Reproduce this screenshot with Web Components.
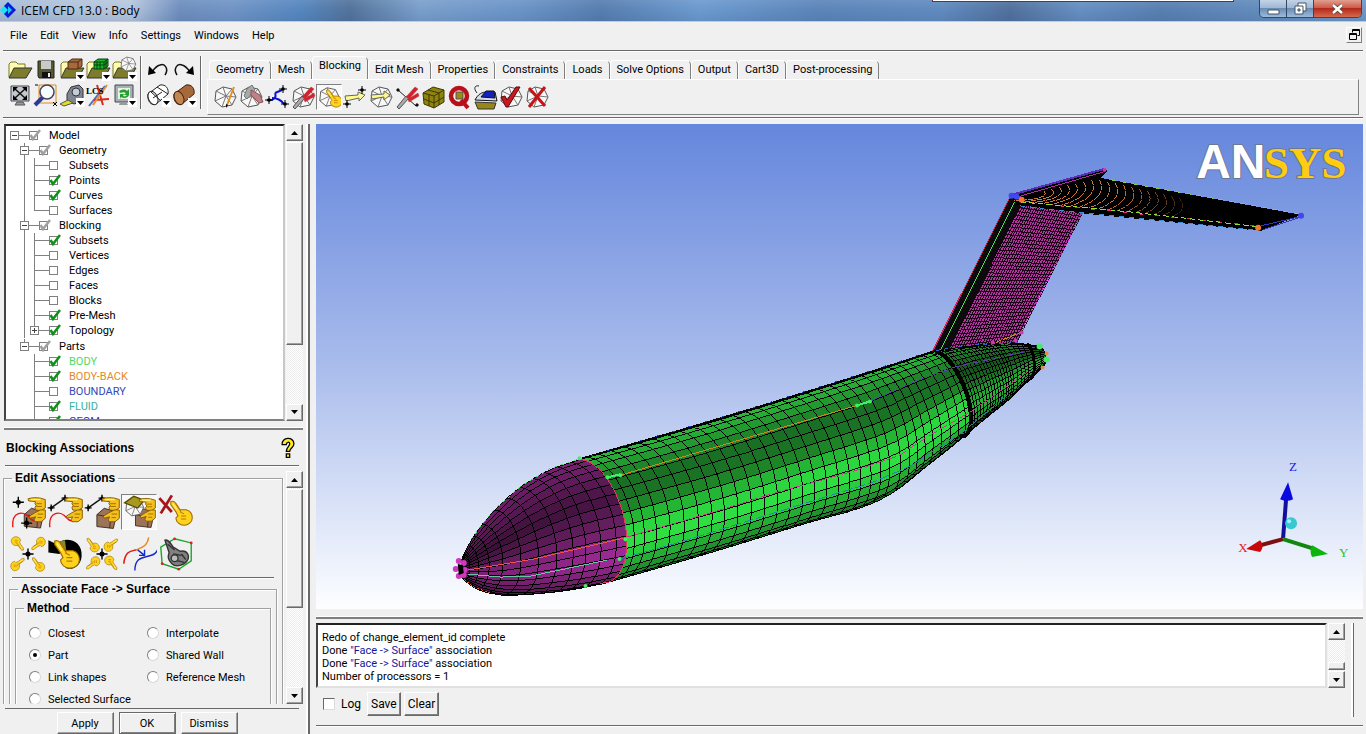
<!DOCTYPE html>
<html lang="en">
<head>
<meta charset="utf-8">
<title>ICEM CFD 13.0 : Body</title>
<style>
html,body{margin:0;height:100%;background:#f0f0f0}
body{font:11px Roboto,"Liberation Sans",sans-serif;color:#000}
</style>
</head>
<body>
<icem-app></icem-app>
<script>
const define = (name, html, init) => {
  const t = document.createElement('template');
  t.innerHTML = html;
  customElements.define(name, class extends HTMLElement {
    constructor() { super(); this.attachShadow({mode: 'open'}); }
    connectedCallback() {
      if (this.shadowRoot.childNodes.length) return;
      this.shadowRoot.append(t.content.cloneNode(true));
      if (init) init.call(this, this.shadowRoot);
    }
  });
};

/* ---------- icon library, 26 unit grid ---------- */
const wire = `<path d="M11 3l9 2 4 8-4 8-10 2-7-6 1-10z" fill="#f8f8f8" stroke="#555"/><path d="M11 3l3 9 10 1M14 12l6 9M14 12l-4 11M14 12L3 17M14 12L4 7M14 12l6-7" stroke="#777" fill="none"/>`;
const drop = `<path d="M17 16h9v9h-9z" fill="#fff"/><path d="M18 19h7l-3.500 4z"/>`;
const folder = `<path d="M2 21V8l2-2h5l2 2h7v4" fill="#fffcb0" stroke="#77772a"/><path d="M7 12h18l-6 10H2z" fill="#7c7c2c" stroke="#333"/>`;
const hand = `<path d="M3 2c2-1 4 0 5 2l4 6 6 0c4 1 6 4 6 8s-4 7-8 7-8-3-8-7l2-2-2-4-5-7z" fill="#ffd21c" stroke="#9a6a00"/><path d="M12 12l4 2M13 16l5 0M13 19l5 0M8 4l5 8" stroke="#b37a00" fill="none"/><path d="M5 4l4 6" stroke="#fff6a0" fill="none"/>`;
const handsLeft = `<g fill="#f4c01c" stroke="#8a5c00" stroke-width=".7"><path d="M13 3.500c3-1 6-1 9-.5l3.500 1v6l-3 2-4-.5-.5-2 1-1-1-1.500 .5-1.500-5-.5z"/><path d="M14 16l4-2.500 4-2 3.500 0v6l-3 2.500-4.500 0-.5-1.500 1-2-4 1z"/></g><path d="M19 7h4M19 9h4M20 14.500h4M20 17h3" stroke="#a06c00" stroke-width=".7"/><path d="M15 4h7" stroke="#fff48a"/>`;
const star = (x, y, r) => `<path d="M${x - r} ${y}h${2 * r}M${x} ${y - r}v${2 * r}" stroke="#000"/><circle cx="${x}" cy="${y}" r="${r / 2.2}"/>`;
const at = (x, y, s, g, r = 0) => `<g transform="translate(${x} ${y}) rotate(${r}) scale(${s})">${g}</g>`;
const box = `<path d="M2 9l8-7 14 4-4 18-18-2z" fill="#9a735a" stroke="#3a2618"/><path d="M2 9l15 3 7-6M17 12l-1 12" stroke="#3a2618" fill="none"/>`;
const pliers = `<path d="M3 23l9-11 3 2L5 25z" fill="#aaa" stroke="#555"/><path d="M12 13l9-10 3 2-9 10zM14 15l10-6 1 3-10 6z" fill="#d8202c" stroke="#a84048" stroke-width=".5"/>`;
const points = (x, y, r) => at(x, y, .42, hand, r);
const ICONS = {
  open: folder,
  save: `<path d="M5 5h16v17H6l-1-2z" fill="#55572c" stroke="#222"/><path d="M8 5h10v8H8z" fill="#c9cbc9"/><path d="M9 16h9v6H9z" fill="#111"/><path d="M15 17h2v4h-2z" fill="#eee"/>`,
  openGeo: folder + `<path d="M9 6l4-3h10v7l-4 3H9z" fill="#a86a3c" stroke="#4a2a12"/><path d="M9 6h10v7M19 6l4-3" stroke="#4a2a12" fill="none"/>` + drop,
  openMesh: folder + `<path d="M9 6l4-3h10v7l-4 3H9z" fill="#18b428" stroke="#05400c"/><path d="M9 6h10v7M19 6l4-3M12 6v7M15 6v7M9 9h10l4-3M21 4v8" stroke="#05400c" fill="none"/>` + drop,
  openBlock: folder + at(8, -1, .7, wire) + drop,
  fit: `<path d="M4 4h18v15H4z" fill="#c4c8cc" stroke="#445"/><path d="M10 20h6l2 3H8z" fill="#999" stroke="#555"/><path d="M8 7l10 9M18 7L8 16" stroke="#111" stroke-width="1.500"/><path d="M6 5h5l-5 5zM20 5h-5l5 5zM6 18h5l-5-5zM20 18h-5l5-5z"/>`,
  zoom: `<path d="M6 3h17v18H6z" fill="none" stroke="#e08a20"/><path d="M2 23l8-8" stroke="#2a3a9a" stroke-width="4"/><circle cx="14" cy="10" r="7" fill="#f6fbff" stroke="#445" stroke-width="1.500"/><path d="M20 20l4 4M24 20l-4 4M2 3h3" stroke="#000"/>`,
  measure: `<path d="M8 12l4-7 8-2 4 4v12l-9 3-7-4z" fill="#7e8790" stroke="#333"/><circle cx="17" cy="10" r="4" fill="#c4ccd4" stroke="#334"/><path d="M1 22l8-4 5 3-9 3z" fill="#e0dc20" stroke="#555"/>` + drop,
  lcs: `<path d="M4 24L20 4" stroke="#4a6ac8" stroke-width="2"/><path d="M9 18l15-1M12 3l6 20" stroke="#d82a20" stroke-width="2"/><path d="M8 23L22 3" stroke="#e09030" stroke-width="2"/><text x="1" y="12" font-family="Liberation Serif,serif" font-weight="bold" font-size="9">LCS</text>`,
  refresh: `<path d="M4 3h18v17H4z" fill="#a9b0b4" stroke="#445"/><path d="M7 6h12v11H7z" fill="#e8f0e8"/><path d="M9 20h6l2 3H8z" fill="#999"/><path d="M8 10c2-3 6-3 8-1l2-2v6h-5l2-2c-2-1-4-1-5 0zM18 13c-1 3-5 4-8 2l-1 2v-5h4l-1 2c2 1 3 0 4-1z" fill="#22a12c"/>` + drop,
  undo: `<path d="M20 19c4-6 0-12-5-10-4 1-6 4-8 7" fill="none" stroke="#111" stroke-width="1.500"/><path d="M3 19l1-9 7 7z"/>`,
  redo: `<path d="M6 19c-4-6 0-12 5-10 4 1 6 4 8 7" fill="none" stroke="#111" stroke-width="1.500"/><path d="M23 19l-1-9-7 7z"/>`,
  wireCyl: `<g fill="#fff" stroke="#222"><path d="M3 12l12-9c6-1 9 4 8 9l-12 10c-5 2-9-3-8-10z"/><ellipse cx="8" cy="16" rx="4.500" ry="7" transform="rotate(-25 8 16)"/><path d="M6 10l10 9M12 5l11 7M8 16l9-6" fill="none"/></g>` + drop,
  solidCyl: `<g stroke="#3c2210"><path d="M3 12l12-9c6-1 9 4 8 9l-12 10c-5 2-9-3-8-10z" fill="#a8693a"/><ellipse cx="8" cy="16" rx="4.500" ry="7" transform="rotate(-25 8 16)" fill="#c28450"/></g>` + drop,
  create: wire + `<path d="M15 21L22 3" stroke="#e09020" stroke-width="2"/><path d="M16 21l-2 3 0-4z"/>`,
  split: wire + `<path d="M9 5l5-4 3 5-8 9-3-3z" fill="#a9a9a9" stroke="#777"/><path d="M13 6l9 5 3 7-4 1-8-8z" fill="#c08088" stroke="#855"/>`,
  merge: `<path d="M3 16c6 1 10-2 8-7M8 14c6 0 9 2 12 6M11 9l7-3" stroke="#0a12d8" stroke-width="2" fill="none"/>` + star(5, 16, 4) + star(19, 5, 4) + star(21, 20, 4),
  editBlk: wire + pliers,
  assoc: wire + at(8, 4, .8, hand),
  move: `<path d="M3 12l13-1V8l7 3-6 6v-3L4 17z" fill="#fdf98a" stroke="#666"/>` + star(5, 20, 4) + star(20, 6, 4),
  trans: wire + `<path d="M3 11l13-1V7l6 4-6 5v-3L4 15z" fill="#fdf98a" stroke="#666"/>`,
  editEdge: `<path d="M4 6l18 16" stroke="#222"/>` + pliers + star(4, 6, 2) + star(23, 21, 2),
  premesh: `<path d="M3 9l10-6 11 3v12l-10 6-10-4z" fill="#8f8410" stroke="#3e3900"/><path d="M3 9l11 3 10-6M14 12v12M4 15l10 4 10-6M8 6l11 3v12M9 11v11" stroke="#3e3900" fill="none"/>`,
  quality: `<circle cx="13" cy="12" r="8" fill="none" stroke="#b8101a" stroke-width="4.500"/><path d="M15 16l7 8" stroke="#b8101a" stroke-width="4"/><path d="M10 8h7v7h-7z" fill="#9a8a20" stroke="#554"/>`,
  smooth: `<path d="M3 18l21 1-2 6H6z" fill="#97871a" stroke="#333"/><path d="M3 16c3-6 7-8 12-8l8 0 2 9z" fill="#d6dce8" stroke="#111"/><path d="M9 13l5-6 8 0 1 7z" fill="#1420c0" stroke="#111"/><path d="M5 9C1 4 3 1 7 2" fill="none" stroke="#222"/>`,
  check: wire + `<path d="M3 13l4-1 2 4L18 3l4 0L10 23l-2 0z" fill="#c81820" stroke="#5a0a10"/>`,
  del: wire + `<path d="M5 4l16 18M21 3L5 23" stroke="#c41418" stroke-width="3"/>`,
  help: `<path d="M6 9c-1-9 14-10 14-1 0 5-5 5-5 9h-4c0-5 4-6 4-9s-4-2-4 1z" fill="#ffe81c" stroke="#000" stroke-width="1.500"/><path d="M11 20h4v4h-4z" fill="#ffe81c" stroke="#000" stroke-width="1.500"/>`,
  aVertex: at(9, 9, .65, box) + `<path d="M2 24c-1-12 8-12 12-7 4 5 10 1 11-5" fill="none" stroke="#e81818"/>` + star(6, 6, 4) + star(12, 21, 4) + handsLeft,
  aEdge: `<path d="M3 10L13 3" stroke="#111"/><path d="M2 24c-1-12 8-12 12-7 4 5 10 1 11-9" fill="none" stroke="#e81818"/>` + star(3, 10, 2.5) + star(13, 3, 2.5) + handsLeft,
  aEdgeSurf: at(8, 9, .66, box) + `<path d="M3 10L13 3" stroke="#111"/>` + star(3, 10, 2.5) + star(13, 3, 2.5) + handsLeft,
  aFace: at(9, 9, .66, box) + at(1, 1, .65, wire) + `<path d="M2 6l7-5 8 3-5 6z" fill="#a89820" stroke="#554c00"/>` + handsLeft,
  aRemove: `<path d="M1 3l9 10M10 1L2 14" stroke="#a81418" stroke-width="2"/>` + at(7, 4, .74, hand),
  aUpdate: points(11, 11, 180) + points(15, 11, 270) + points(15, 15, 0) + points(11, 15, 90) + star(13, 13, 4),
  aReset: `<path d="M1 3l6 3c5-6 19-4 18 9-1 8-8 10-12 8 7-3 6-13-2-13l-2 3-8-1z"/><path d="M9 4l4-1 1 8z" fill="#8a8a20"/>` + at(3, 2, .85, hand),
  aSnap: points(1, 1, 0) + points(25, 1, 90) + points(25, 25, 180) + points(1, 25, 270) + star(13, 13, 4),
  aGroup: `<path d="M2 20c1-10 6-9 9-10 5-2 8-3 9-9" fill="none" stroke="#e88a20"/><path d="M2 20c1-10 6-9 9-10" fill="none" stroke="#e02020"/><path d="M10 25c0-8 4-9 8-10 5-1 9-2 9-9" fill="none" stroke="#1428d0"/><path d="M12 10l5 4M17 10v4h-4" fill="none" stroke="#1428d0"/>`,
  aAuto: `<path d="M2 8l10-6 12 3v13l-9 6-12-4z" fill="none" stroke="#18a828"/><path d="M5 3c2-1 4 2 6 5l5 3c6-1 7 4 5 7s-8 5-11 2-3-5-2-8z" fill="#808080" stroke="#333"/><path d="M7 6l5 4M11 13l6 1M10 17l9 2M17 13l3 4" stroke="#333"/><circle cx="12" cy="16" r="2.500" fill="#bbb" stroke="#333"/><g fill="#e02020"><circle cx="12" cy="2" r="1"/><circle cx="24" cy="5" r="1"/><circle cx="3" cy="20" r="1"/><circle cx="15" cy="24" r="1"/></g>`
};

define('cfd-icon', `<style>:host{display:block;width:26px;height:26px}svg{display:block;width:100%;height:100%}</style><svg viewBox="0 0 26 26" aria-hidden="true"></svg>`, function (r) {
  r.querySelector('svg').innerHTML = ICONS[this.getAttribute('name')] || '';
});

define('tool-button', `<style>
:host{display:block;width:26px;height:26px}
button{display:block;width:100%;height:100%;padding:0;border:0;background:none}
cfd-icon{width:100%;height:100%}
:host([active]) button{border:1px solid;border-color:#808080 #fff #fff #808080;background:#f8f8f8}
</style><button type="button"></button>`, function (r) {
  const name = this.getAttribute('name'), b = r.querySelector('button');
  b.setAttribute('aria-label', name);
  b.innerHTML = `<cfd-icon name="${name}"></cfd-icon>`;
});

define('title-bar', `<style>
:host{display:flex;height:22px;box-sizing:border-box;border-bottom:1px solid #b9cde4;
 background:linear-gradient(#ffffff14,#ffffff00 40%,#00205018),linear-gradient(90deg,#a9bdd8 0,#b7c8df 130px,#6f8fbe 180px,#7295c6 230px,#5788c0 300px,#54749c 350px,#7ba0cc 420px,#6c95c8 520px,#587fb0 600px,#6d9bd0 700px,#5d86ba 820px,#628cc0 940px,#52729e 1010px,#6790c2 1080px,#5a80b2 1160px,#6f9ac8)}
.mark{width:18px;height:18px;margin:1px 1px 0 0}
.name{flex:1;font:12px/22px "Open Sans","Noto Sans",sans-serif;padding-left:2px}
.peek{width:300px;height:1px;background:#fff;border:1px solid #7a2a35;border-top:0;margin-right:25px}
.win{display:flex;height:18px;margin-right:4px;border:1px solid #33475f;border-top:0;border-radius:0 0 5px 5px;overflow:hidden;box-sizing:border-box}
.win button{width:27px;border:0;border-right:1px solid #33475f;padding:0;background:linear-gradient(#c2d3e6,#9fb8d4 45%,#6a8cb4 50%,#9cbbdc);display:grid;place-items:center}
.win .x{width:47px;border-right:0;background:linear-gradient(#e0a090,#cf5a48 45%,#b22a1c 50%,#d8684c)}
</style>
<svg class="mark" viewBox="0 0 18 18" aria-hidden="true"><path d="M8 1l8 8-8 8-8-8z" fill="#18e4f4"/><path d="M8 1l4 4-4 4-4-4zM12 5l4 4-4 4-4-4zM8 9l4 4-4 4-4-4z" fill="#1018d8"/><path d="M8 5l4 4-4 4" fill="#18c8f8"/></svg>
<div class="name">ICEM CFD 13.0 : Body</div><div class="peek"></div>
<div class="win"><button aria-label="Minimize"><svg width="13" height="12"><path d="M1 7h11v4H1z" fill="#fff" stroke="#456"/></svg></button>
<button aria-label="Restore"><svg width="13" height="13"><path d="M4 1h8v8H4z" fill="#fff" stroke="#456"/><path d="M1 4h8v8H1z" fill="#fff" stroke="#456"/><path d="M4 7h2v2H4z" fill="#9fb8d4" stroke="#456"/></svg></button>
<button class="x" aria-label="Close"><svg width="13" height="12"><path d="M2 2l9 8M11 2l-9 8" stroke="#543" stroke-width="4"/><path d="M2 2l9 8M11 2l-9 8" stroke="#fff" stroke-width="2.500"/></svg></button></div>`);

define('menu-bar', `<style>
:host{display:flex;align-items:center;justify-content:space-between;height:28px;margin:0 3px;border-bottom:1px solid #696969;box-shadow:0 1px #fff}
nav{display:flex;gap:13px;padding-left:7px}
a{color:inherit;text-decoration:none;line-height:26px}
button{width:16px;height:16px;padding:0;border:1px solid;border-color:#fff #808080 #808080 #fff;background:#f0f0f0;display:grid;place-items:center;margin:0 1px 3px 0}
</style><nav></nav><button aria-label="Restore window"><svg width="12" height="12"><path d="M4 1h7v6H9M4 4V1M4 2h7M1 5h7v6H1zM1 6h7" fill="none" stroke="#000" transform="translate(.5 -.5)"/></svg></button>`, function (r) {
  r.querySelector('nav').innerHTML = ['File', 'Edit', 'View', 'Info', 'Settings', 'Windows', 'Help'].map(t => `<a href="#">${t}</a>`).join('');
});

define('main-toolbar', `<style>
:host{display:flex;height:66px;box-sizing:border-box;margin:1px 3px 0;padding:4px 0 0 4px;border-bottom:1px solid #696969;box-shadow:0 1px #fff}
.grid{display:grid;grid-template-columns:repeat(5,26px);grid-auto-rows:26px}
.two{grid-template-columns:repeat(2,26px)}
i{width:1px;height:53px;background:#696969;border-right:1px solid #fff;margin:0 3px}
tab-strip{flex:1;margin-left:2px}
</style><div class="grid a"></div><i></i><div class="grid two b"></div><i></i><tab-strip></tab-strip>`, function (r) {
  const fill = (s, list) => r.querySelector(s).innerHTML = list.split(' ').map(n => `<tool-button name="${n}"></tool-button>`).join('');
  fill('.a', 'open save openGeo openMesh openBlock fit zoom measure lcs refresh');
  fill('.b', 'undo redo wireCyl solidCyl');
});

define('tab-strip', `<style>
:host{display:flex;flex-direction:column;margin-right:4px}
.tabs{display:flex;height:23px;align-items:flex-end;padding-left:2px}
.tabs button{height:19px;padding:0 6px;border:1px solid;border-color:#fff #808080 transparent #fff;border-bottom:0;border-radius:4px 5px 0 0;background:#f0f0f0;font:11px/16px Roboto,sans-serif;white-space:nowrap;color:#000}
.tabs button[aria-selected=true]{height:23px;padding-bottom:4px}
.tools{display:flex;height:36px;box-sizing:border-box;border:1px solid;border-color:#fff #808080 #808080 #fff;padding:4px 0 0 4px}
</style><div class="tabs" role="tablist"></div><div class="tools"></div>`, function (r) {
  r.querySelector('.tabs').innerHTML = ['Geometry', 'Mesh', 'Blocking', 'Edit Mesh', 'Properties', 'Constraints', 'Loads', 'Solve Options', 'Output', 'Cart3D', 'Post-processing']
    .map(t => `<button role="tab" aria-selected="${t === 'Blocking'}">${t}</button>`).join('');
  r.querySelector('.tools').innerHTML = 'create split merge editBlk assoc move trans editEdge premesh quality smooth check del'.split(' ')
    .map(n => `<tool-button name="${n}"${n === 'assoc' ? ' active' : ''}></tool-button>`).join('');
});

define('scroll-bar', `<style>
:host{display:flex;flex-direction:column;width:17px;flex:none;background:repeating-conic-gradient(#fff 0 25%,#ececec 0 50%) 0 0/2px 2px}
button,.thumb{box-sizing:border-box;border:1px solid;border-color:#fff #696969 #696969 #fff;box-shadow:inset -1px -1px #a0a0a0;background:#f0f0f0}
button{height:17px;flex:none;padding:0;display:grid;place-items:center}
</style><button aria-label="Up"><svg width="7" height="4"><path d="M0 4l3.500-4L7 4z"/></svg></button><div class="pre"></div><div class="thumb"></div><div class="post"></div><button aria-label="Down"><svg width="7" height="4"><path d="M0 0l3.500 4L7 0z"/></svg></button>`, function (r) {
  const p = this.getAttribute('parts').split(' ');
  ['.pre', '.thumb', '.post'].forEach((s, i) => r.querySelector(s).style.flex = `${p[i]} 1 0`);
});

define('tree-node', `<style>
:host{display:block;background:linear-gradient(#808080,#808080) 4px 0/1px 100% no-repeat}
:host([last]){background-size:1px 7px}
:host([bare]){background:none}
:host([group]){margin-top:1px;background-position:4px -1px}
.row{display:flex;align-items:center;height:15px}
.ex{width:9px;height:9px;padding:0;box-sizing:border-box;border:1px solid #808080;background:#fff;display:grid;place-items:center}
.leaf{width:5px;height:1px;margin-left:4px;background:#808080}
.arm{width:10px;height:1px;background:#808080}
.box{display:grid;width:14px;height:11px;margin-right:6px}
.box>*{grid-area:1/1}
input{appearance:none;width:9px;height:9px;margin:1px 0 0;border:1px solid #808080;background:#fff;box-sizing:border-box}
svg{overflow:visible}
label{line-height:15px;white-space:nowrap}
.kids{padding-left:10px}
</style><div class="row"><span class="leaf"></span><span class="arm"></span><span class="box"><input type="checkbox" id="c"><svg width="12" height="10" fill="none"></svg></span><label for="c"></label></div><div class="kids"><slot></slot></div>`, function (r) {
  const g = n => this.getAttribute(n), check = g('check');
  if (g('ex')) {
    const b = document.createElement('button');
    b.className = 'ex'; b.setAttribute('aria-label', 'Toggle');
    b.innerHTML = `<svg width="5" height="5"><path d="M0 2h5v1H0z${g('ex') === 'plus' ? 'M2 0h1v5H2z' : ''}" fill="#444"/></svg>`;
    r.querySelector('.leaf').replaceWith(b);
  }
  r.querySelector('label').textContent = g('label');
  if (g('color')) r.querySelector('label').style.color = g('color');
  r.querySelector('input').checked = !!check;
  if (check) r.querySelector('.box svg').innerHTML = `<path d="M1.500 5l2.500 4L11 0" stroke="${check === 'on' ? '#109018' : '#a0a0a0'}" stroke-width="2.500"/>`;
});

define('model-tree', `<style>
:host{display:flex;min-height:0}
.pane{flex:1;overflow:hidden;background:#fff;border:2px solid;border-color:#222 #c8c8c8 #808080 #444;padding:2px 0 0 4px;margin-right:1px}
</style><div class="pane"></div><scroll-bar parts="1 203 60"></scroll-bar>`, function (r) {
  const leaf = (l, on, x = '') => `<tree-node label="${l}" ${on ? 'check="on"' : ''} ${x}></tree-node>`;
  r.querySelector('.pane').innerHTML = `<tree-node bare label="Model" check="part" ex="minus">
<tree-node label="Geometry" check="part" ex="minus">${leaf('Subsets')}${leaf('Points', 1)}${leaf('Curves', 1)}${leaf('Surfaces', 0, 'last')}</tree-node>
<tree-node label="Blocking" check="part" ex="minus">${leaf('Subsets', 1)}${leaf('Vertices')}${leaf('Edges')}${leaf('Faces')}${leaf('Blocks')}${leaf('Pre-Mesh', 1)}${leaf('Topology', 1, 'ex="plus" last')}</tree-node>
<tree-node group last label="Parts" check="part" ex="minus">${leaf('BODY', 1, 'color="#4fd964"')}${leaf('BODY-BACK', 1, 'color="#e08a2c"')}${leaf('BOUNDARY', 0, 'color="#3548b8"')}${leaf('FLUID', 1, 'color="#35b0a8"')}${leaf('GEOM', 1, 'color="#2840c0"')}</tree-node></tree-node>`;
});

define('group-box', `<style>
:host{display:block}
fieldset{margin:0;padding:0;min-width:0;border:1px solid #a0a0a0;border-bottom:0;box-shadow:inset 1px 1px #fff,1px 0 #fff}
legend{font:bold 12px/14px "Liberation Sans",sans-serif;margin-left:8px;padding:0 3px}
</style><fieldset><legend></legend><slot></slot></fieldset>`, function (r) {
  r.querySelector('legend').textContent = this.getAttribute('label');
});

define('association-panel', `<style>
:host{display:flex;flex-direction:column;min-height:0}
header{display:flex;justify-content:space-between;align-items:center;height:34px;flex:none;border-bottom:1px solid #696969;box-shadow:0 1px #fff;margin:0 4px 0 1px}
h2{font:bold 12px/16px "Liberation Sans",sans-serif;margin:0;padding-left:1px}
header cfd-icon{width:22px;height:22px}
.mid{display:flex;flex:1;min-height:0;margin-top:5px}
.view{flex:1;overflow:hidden;padding-right:3px;margin-left:-1px}
.icons{display:grid;grid-template-columns:repeat(5,37px);grid-auto-rows:36px;row-gap:6px;padding:9px 0 0 6px}
.icons tool-button{width:36px;height:36px}
hr{border:0;border-top:1px solid #696969;box-shadow:0 1px #fff;margin:5px 8px 4px}
.outer{margin:0 5px}
.inner{margin:5px 5px 0}
.opts{display:grid;grid-template-columns:118px 1fr;grid-auto-rows:22px;padding:7px 0 0 13px}
label{display:flex;align-items:center;gap:7px}
input{appearance:none;width:12px;height:12px;margin:0;border-radius:50%;border:1px solid;border-color:#808080 #d8d8d8 #d8d8d8 #808080;background:#fff;display:grid;place-items:center}
input:checked::after{content:"";width:4px;height:4px;border-radius:50%;background:#000}
footer{flex:none;display:flex;justify-content:center;gap:5px;height:26px;box-sizing:border-box;border-top:1px solid #696969;margin:4px 4px 0 1px;padding:3px 10px 0 0}
footer button{width:57px;height:22px;border:1px solid;border-color:#fff #696969 #696969 #fff;box-shadow:inset -1px -1px #a0a0a0;background:#f0f0f0;font:inherit;padding:0;color:#000}
footer .def{border-color:#696969;box-shadow:inset 1px 1px #fff,inset -1px -1px #808080}
</style><header><h2>Blocking Associations</h2><cfd-icon name="help"></cfd-icon></header>
<div class="mid"><div class="view"><group-box label="Edit Associations"><div class="icons"></div><hr>
<group-box class="outer" label="Associate Face -&gt; Surface"><group-box class="inner" label="Method"><div class="opts"></div></group-box></group-box></group-box></div>
<scroll-bar parts="1 116 78"></scroll-bar></div>
<footer><button>Apply</button><button class="def">OK</button><button>Dismiss</button></footer>`, function (r) {
  r.querySelector('.icons').innerHTML = 'aVertex aEdge aEdgeSurf aFace aRemove aUpdate aReset aSnap aGroup aAuto'.split(' ')
    .map(n => `<tool-button name="${n}"${n === 'aFace' ? ' active' : ''}></tool-button>`).join('');
  r.querySelector('.opts').innerHTML = ['Closest', 'Interpolate', 'Part', 'Shared Wall', 'Link shapes', 'Reference Mesh', 'Selected Surface']
    .map(t => `<label><input type="radio" name="m"${t === 'Part' ? ' checked' : ''}>${t}</label>`).join('');
});

/* ---------- aircraft mesh ---------- */
const cr = (a, b, c, d, t) => .5 * (2 * b + (c - a) * t + (2 * a - 5 * b + 4 * c - d) * t * t + (3 * b - a - 3 * c + d) * t * t * t);
/* a station is [topX, topY, bottomX, bottomY, bulgeX, bulgeY] */
const station = (S, t) => {
  const n = S.length - 1, i = Math.min(n - 1, Math.floor(t)), f = t - i;
  return S[0].map((_, k) => cr(S[Math.max(0, i - 1)][k], S[i][k], S[i + 1][k], S[Math.min(n, i + 2)][k], f));
};
const onRing = (s, v) => {
  const mx = (s[0] + s[2]) / 2, my = (s[1] + s[3]) / 2, c = Math.cos(Math.PI * v), q = Math.sin(Math.PI * v);
  return (mx + (s[0] - mx) * c + s[4] * q).toFixed(1) + ' ' + (my + (s[1] - my) * c + s[5] * q).toFixed(1);
};
const ramp = (stops, v) => {
  let i = 0; while (i < stops.length - 2 && v > stops[i + 1][0]) i++;
  const [a, ca] = stops[i], [b, cb] = stops[i + 1], f = (v - a) / (b - a);
  return ca.map((x, k) => x + (cb[k] - x) * f);
};
const GREEN = [[0, [46, 190, 62]], [.14, [36, 160, 50]], [.3, [24, 105, 34]], [.4, [28, 128, 38]], [.48, [38, 190, 54]], [.56, [46, 228, 68]], [.64, [44, 215, 62]], [.74, [34, 160, 48]], [.86, [28, 120, 40]], [1, [24, 100, 34]]];
const PURPLE = [[0, [128, 36, 122]], [.15, [110, 30, 104]], [.35, [72, 20, 68]], [.5, [110, 32, 104]], [.6, [156, 42, 148]], [.7, [160, 42, 152]], [.82, [112, 32, 106]], [1, [70, 20, 66]]];
const surface = (S, ts, rows, pal, dim, stroke) => {
  const rings = ts.map(t => station(S, t));
  let out = '';
  for (let i = 0; i < rings.length - 1; i++) for (let j = 0; j < rows; j++) {
    const d = dim(i / rings.length), c = ramp(pal, (j + .5) / rows).map(x => Math.round(x * d));
    out += `<path d="M${onRing(rings[i], j / rows)}L${onRing(rings[i + 1], j / rows)} ${onRing(rings[i + 1], (j + 1) / rows)} ${onRing(rings[i], (j + 1) / rows)}z" fill="rgb(${c})"/>`;
  }
  return `<g stroke="#000" stroke-width="${stroke}">${out}</g>`;
};
const ringPath = (s, w, col = '#000') => `<path d="M${Array.from({length: 21}, (_, i) => onRing(s, i / 20)).join('L')}" fill="none" stroke="${col}" stroke-width="${w}"/>`;
const spread = counts => {
  const ts = [];
  counts.forEach((k, i) => { for (let j = 0; j < k; j++) ts.push(i + j / k); });
  return [...ts, counts.length];
};

define('mesh-view', `<style>
:host{display:block;min-height:0;background:linear-gradient(#6486dc,#a9bcec 50%,#fdfeff)}
svg{display:block;width:100%;height:100%}
</style><svg viewBox="316 124 1047 486" role="img" aria-label="Surface mesh"></svg>`, function (r) {
  const nose = [[460, 562, 460, 578, 2, 0], [473, 537, 476, 590, 14, 0], [493, 512, 500, 596, 22, 1], [518, 489, 533, 595, 28, 2], [548, 471, 567, 591, 32, 3], [580, 460, 600, 584, 35, 4]];
  const body = [[580, 460, 600, 584, 35, 4], [680, 432, 700, 555, 33, 5], [770, 405, 795, 526, 30, 5], [850, 380, 873, 502, 26, 5], [897, 365, 920, 469, 22, 4], [936, 352, 960, 437, 20, 4]];
  const tail = [[936, 352, 960, 437, 20, 4], [965, 347, 982, 419, 18, 3], [995, 344, 1004, 402, 14, 2], [1020, 344, 1024, 385, 7, 1], [1040, 347, 1042, 368, 5, 0]];
  const line = (d, c, w = 1, dash = '') => `<path d="${d}" fill="none" stroke="${c}" stroke-width="${w}" stroke-dasharray="${dash}"/>`;
  const dots = (c, pts, n = 3) => pts.map(([x, y]) => `<circle cx="${x}" cy="${y}" r="${n}" fill="${c}"/>`).join('');

  /* vertical fin: rows parallel to the root, columns parallel to the leading edge */
  const A = [946, 350], B = [1022, 204], C = [1083, 213], D = [1017, 343];
  const mix = (p, q, t) => [p[0] + (q[0] - p[0]) * t, p[1] + (q[1] - p[1]) * t];
  let fin = '';
  for (let i = 0; i <= 38; i++) { const p = mix(A, B, i / 38), q = mix(D, C, i / 38); fin += `M${p}L${q}`; }
  let cols = '';
  for (let i = 0; i <= 26; i++) { const p = mix(A, D, i / 26), q = mix(B, C, i / 26); cols += `M${p}L${q}`; }

  /* glints between the stabiliser's chord lines */
  let arcs = '';
  for (let i = 0; i < 18; i++) {
    const x = 1044 + i * 8, top = i < 7 ? 191 - i * 1.8 : 180 + (i - 7) * 1.8, bot = 201 + i * .9, back = Math.max(6, 30 - i * 1.4);
    arcs += `<path d="M${x} ${top}Q${x + 9} ${(top + bot) / 2 + 3} ${x - back} ${bot}" stroke-opacity="${i < 10 ? 1 : 1 - (i - 9) * .09}"/>`;
  }

  r.querySelector('svg').innerHTML = `
<g shape-rendering="crispEdges">
<path d="M933 351L1010 198 1083 212 1020 335 1017 344z" fill="#b0389c"/>
${line(fin, '#1c0618', 1)}${line(cols, '#1c0618', 1)}
<path d="M934 351L1010 198 1024 200 949 351z" fill="#0c0a0c"/>
${line('M933 351L1010 198', '#d8243c', 1)}${line('M941 350L1016 200', '#3fe050', 1)}${line('M1083 213L1022 333', '#c02cc0', 1, '2 3')}
<path d="M1012 196L1104 169 1108 171 1101 178 1302 215 1262 231 1240 229 1087 214 1016 205z"/>
${line('M1012 195L1105 169', '#5a2cb8', 2)}${line('M1018 197L1104 172', '#b02ca0', 1)}
<g fill="none" stroke="#d07838" stroke-dasharray="5 1">${arcs}</g>
${line('M1020 202L1130 212 1260 227', '#9ae030', 1, '6 3')}${line('M1060 206L1258 226', '#d8306c', 1, '4 12')}${line('M1020 206L1085 213 1256 230', '#3a90d8', 1, '5 5')}${line('M1112 180L1300 214', '#80d830', 1, '4 7')}${line('M1262 226L1300 217M1264 230L1300 218', '#3038c0', 1)}
${surface(tail, spread([8, 8, 4, 3]), 20, GREEN, () => .8, 1)}
${surface(body, spread([8, 7, 7, 5, 5]), 16, GREEN, () => 1, 1)}
${surface(nose, [0, .15, .35, .65, 1, 1.47, 2.05, 2.55, 3.05, 3.5, 3.85, 4.25, 4.63, 5], 18, PURPLE, u => .7 + u * .35, 1)}
${ringPath(station(tail, 0), 4)}${ringPath(station(tail, 3.3), 3)}
${ringPath(station(nose, 5), 1, '#e03a60')}
${line('M582 459L680 431 770 404 850 379 897 364 936 351', '#000', 2)}${line('M590 456L680 430 770 403 850 378 930 352', '#2040b8', 1, '3 14')}
${line('M936 351L965 346 1018 343', '#3060d0', 1, '4 4')}${line('M470 540L493 511 520 487 550 469 578 460', '#40e060', 1, '3 4')}
${line('M607 478L620 476 857 406', '#c88a20', 1)}${line('M607 478L620 475M857 406L870 402', '#40f070', 2)}
${line('M870 402L920 380 957 367 1027 352', '#5a40b0', 1, '8 3')}
${line('M467 571L533 560 623 539', '#f05048', 1)}${line('M623 539L723 510 770 495 853 472 897 457 940 430 970 413 1027 373', '#c83a88', 1, '9 3')}
${line('M467 575L500 578 530 577 607 561', '#62c8a0', 1)}${line('M619 560L673 545 770 515 873 483 910 467 963 433 1007 396', '#2088a0', 1, '10 3')}
${line('M460 578L473 588 490 594', '#e86030', 1, '2 2')}
${line('M996 343L1023 332', '#d88a28', 1, '6 2')}
</g>
${dots('#40f060', [[579, 459], [607, 478], [620, 476], [857, 406], [870, 402], [585, 587], [619, 560], [625, 540]], 2)}
${dots('#48e868', [[1040, 347], [1047, 360]])}${dots('#f08830', [[1047, 354], [1043, 368]], 2)}
${dots('#d038c0', [[458, 562], [463, 564], [455, 570], [464, 571], [458, 577], [463, 576]], 3)}<path d="M457 565l5 1 1 8-5 2z"/>
${dots('#d038b0', [[1105, 170], [1022, 333], [1016, 341], [993, 343]], 2)}${dots('#4048f0', [[1012, 196], [1017, 197], [1302, 216]])}${dots('#f07830', [[1259, 228], [1022, 200]])}
<g stroke-width="4" fill="none"><path d="M1284 539L1287 500" stroke="#10109c"/><path d="M1284 540L1258 547" stroke="#7c1010"/><path d="M1284 540L1316 550" stroke="#108810"/></g>
<path d="M1289 483l5 17q-6 3-13 0z" fill="#0a0ae0"/><path d="M1247 550l14-9q5 6 0 12z" fill="#c80808"/><path d="M1329 555l-16-9q-3 6 0 12z" fill="#0cb40c"/>
<circle cx="1292" cy="524" r="6" fill="#38c8d0"/><circle cx="1290" cy="522" r="2" fill="#a0f4f4"/>
<g font-family="Liberation Serif,serif" font-size="13"><text x="1290" y="472" fill="#1a1ae0">Z</text><text x="1239" y="553" fill="#e02020">X</text><text x="1340" y="558" fill="#20c820">Y</text></g>
<g stroke="#6a7898" stroke-width="2" paint-order="stroke"><text x="1197" y="178" font-family="Liberation Sans,sans-serif" font-weight="bold" font-size="48" fill="#fff">AN</text><text x="1265" y="178" font-family="Liberation Serif,serif" font-size="45" font-weight="bold" fill="#ffcc10">SYS</text></g>`;
});

define('message-log', `<style>
:host{display:flex;flex-direction:column;border-bottom:1px solid #696969;margin-top:8px;border-top:2px solid #808080;box-shadow:0 -1px #fff,0 1px #fff}
.body{display:flex;flex:1;margin-top:4px}
.main{flex:1}
.top{display:flex;height:65px}
.out{flex:1;background:#fff;border:2px solid;border-color:#222 #e0e0e0 #e0e0e0 #444;padding:6px 0 0 4px;line-height:13px;overflow:hidden;margin-right:1px;box-sizing:border-box}
.out b{font-weight:normal;color:#1414a0}
.row{display:flex;align-items:center;height:32px;padding:0 0 5px 7px;font-size:12px}
input{appearance:none;width:12px;height:12px;margin:0 6px 0 0;border:1px solid;border-color:#696969 #ddd #ddd #696969;background:#fff}
button{height:24px;padding:0 3px;margin-left:3px;border:1px solid;border-color:#fff #696969 #696969 #fff;box-shadow:inset -1px -1px #808080;background:#f0f0f0;font:12px Roboto,sans-serif;color:#000}
.row label{margin-right:3px}
.edge{width:2px;height:94px;border-right:1px solid #696969;background:#fff;margin:0 9px 0 6px}
</style><div class="body"><div class="main"><div class="top"><div class="out" role="log"><div>Redo of change_element_id complete</div><div>Done <b>"Face -&gt; Surface"</b> association</div><div>Done <b>"Face -&gt; Surface"</b> association</div><div>Number of processors = 1</div></div><scroll-bar parts="23 7 1"></scroll-bar></div>
<div class="row"><input type="checkbox" id="log"><label for="log">Log</label><button>Save</button><button>Clear</button></div></div><div class="edge"></div></div>`);

define('icem-app', `<style>
:host{display:flex;flex-direction:column;height:100vh;background:#f0f0f0;overflow:hidden}
.work{display:flex;flex:1;min-height:0;padding-top:6px}
.side{width:299px;flex:none;display:flex;flex-direction:column;padding:0 5px 0 4px;border-right:2px solid #696969;box-shadow:inset -2px 0 #fff}
model-tree{flex:297 1 0}
.split{height:2px;background:#808080;border-top:1px solid #fff;margin:6px 0 1px}
association-panel{flex:303 1 0}
.stage{flex:1;min-width:0;display:flex;flex-direction:column;padding:0 3px 8px 6px}
mesh-view{flex:1}
</style><title-bar></title-bar><menu-bar></menu-bar><main-toolbar></main-toolbar>
<div class="work"><div class="side"><model-tree></model-tree><div class="split"></div><association-panel></association-panel></div>
<div class="stage"><mesh-view></mesh-view><message-log></message-log></div></div>`);
</script>
</body>
</html>
